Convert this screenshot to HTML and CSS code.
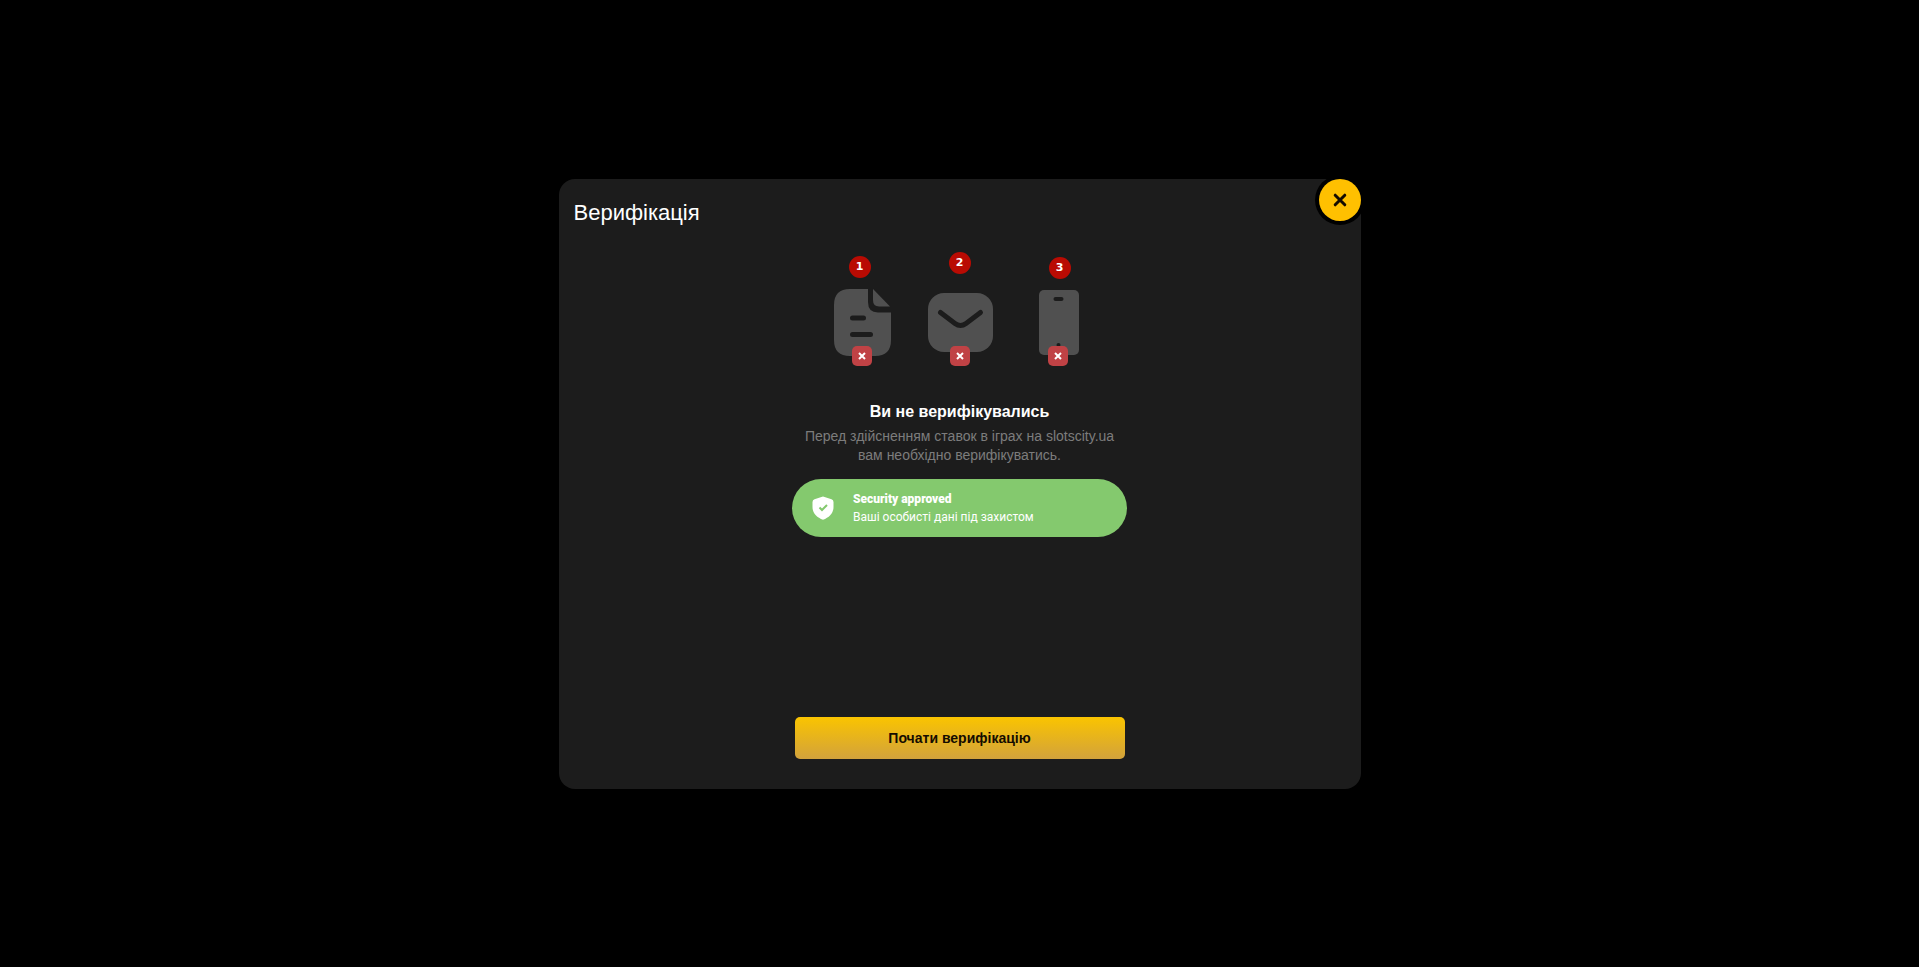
FILE: index.html
```html
<!DOCTYPE html>
<html lang="uk">

<head>
    <meta charset="UTF-8">
    <meta name="viewport" content="width=device-width, initial-scale=1.0">
    <title>Верифікація</title>
    <link rel="stylesheet" href="styles.css">
</head>

<body>
    <main class="overlay">
        <div class="modal" role="dialog" aria-labelledby="modalTitle">
            <button class="modal-close" type="button" aria-label="Закрити">
                <svg width="14" height="14" viewBox="0 0 14 14">
                    <path d="M2.2 2.2L11.8 11.8M11.8 2.2L2.2 11.8" />
                </svg>
            </button>
            <h1 class="modal-title" id="modalTitle">Верифікація</h1>

            <div class="steps">
                <div class="step">
                    <span class="step-number">1</span>
                    <svg width="100" height="88" viewBox="0 0 100 88">
                        <path class="shape" d="M40 11H58V24Q58 34.500 68 34.500H81V62Q81 78 65 78H40Q24 78 24 62V27Q24 11 40 11Z" />
                        <path class="shape" d="M63 11L80 28.500H69Q63 28.500 63 22Z" />
                        <path class="line" d="M42.500 40H53.500M42.500 56.500H60.500" />
                        <rect class="fail" x="42" y="68" width="20" height="20" rx="5" />
                        <path class="cross" d="M49 75L55 81M55 75L49 81" />
                    </svg>
                </div>
                <div class="step">
                    <span class="step-number">2</span>
                    <svg width="100" height="92" viewBox="0 0 100 92">
                        <rect class="shape" x="18" y="19" width="65" height="59" rx="16" />
                        <path class="line" d="M30.500 38.500L45 49.500Q50.500 53.500 56 49.500L70.500 38.500" />
                        <rect class="fail" x="40" y="72" width="20" height="20" rx="5" />
                        <path class="cross" d="M47 79L53 85M53 79L47 85" />
                    </svg>
                </div>
                <div class="step">
                    <span class="step-number">3</span>
                    <svg width="100" height="87" viewBox="0 0 100 87">
                        <rect class="shape" x="29" y="11" width="40" height="65" rx="5" />
                        <path class="line line-thin" d="M45.500 20H51.500" />
                        <circle class="dot" cx="48.500" cy="66" r="2" />
                        <rect class="fail" x="38" y="67" width="20" height="20" rx="5" />
                        <path class="cross" d="M45 74L51 80M51 74L45 80" />
                    </svg>
                </div>
            </div>

            <h2 class="status">Ви не верифікувались</h2>
            <p class="hint">Перед здійсненням ставок в іграх на slotscity.ua вам необхідно верифікуватись.</p>

            <div class="security">
                <svg width="22" height="24" viewBox="0 0 22 24">
                    <path class="shield" d="M11 0.500L19.500 3.200Q21.500 4 21.500 6V11C21.500 17.500 17 21.500 11 23.800C5 21.500 0.500 17.500 0.500 11V6Q0.500 4 2.500 3.200Z" />
                    <path class="check" d="M7.500 11.500L10 14L15 9" />
                </svg>
                <div>
                    <strong>Security approved</strong>
                    <p>Ваші особисті дані під захистом</p>
                </div>
            </div>

            <button class="start" type="button">Почати верифікацію</button>
        </div>
    </main>
</body>

</html>
```

FILE: styles.css
```css
* {
    box-sizing: border-box;
}

body {
    margin: 0;
    background-color: #000;
    color: #fff;
    font-family: "Liberation Sans", Arial, sans-serif;
}

h1,
h2,
p {
    margin: 0;
}

button {
    border: none;
    cursor: pointer;
}

.overlay {
    display: flex;
    align-items: center;
    justify-content: center;
    min-height: 100vh;
}

.modal {
    position: relative;
    display: flex;
    flex-direction: column;
    align-items: center;
    width: 100%;
    max-width: 802px;
    min-height: 610px;
    padding: 21px 15px 30px;
    background-color: #1c1c1c;
    border-radius: 16px;
}

.modal-close {
    position: absolute;
    top: 0;
    right: 0;
    display: flex;
    align-items: center;
    justify-content: center;
    width: 42px;
    height: 42px;
    padding: 0;
    background-color: #ffc000;
    border-radius: 50%;
    box-shadow: 0 0 0 4px #000;
}

.modal-close path {
    stroke: #150c00;
    stroke-width: 3;
    stroke-linecap: round;
}

.modal-title {
    align-self: flex-start;
    font-size: 22px;
    font-weight: normal;
    line-height: 26px;
}

.steps {
    display: flex;
    align-items: flex-end;
    margin-top: 26px;
}

.step {
    display: flex;
    flex-direction: column;
    align-items: center;
    width: 100px;
}

.step-number {
    width: 22px;
    height: 22px;
    background-color: #b90b03;
    border-radius: 50%;
    font-family: "DejaVu Sans", Verdana, sans-serif;
    font-size: 11px;
    font-weight: bold;
    line-height: 22px;
    text-align: center;
}

.shape {
    fill: #505050;
}

.line {
    fill: none;
    stroke: #1c1c1c;
    stroke-width: 5;
    stroke-linecap: round;
}

.line-thin {
    stroke-width: 4;
}

.dot {
    fill: #1c1c1c;
}

.fail {
    fill: #c04245;
}

.cross {
    stroke: #fff;
    stroke-width: 2;
}

.status {
    margin-top: 36px;
    font-size: 16px;
    line-height: 20px;
}

.hint {
    max-width: 330px;
    margin-top: 5px;
    color: #7c7c7c;
    font-size: 14px;
    line-height: 19px;
    text-align: center;
}

.security {
    display: flex;
    align-items: center;
    gap: 19px;
    width: 100%;
    max-width: 335px;
    min-height: 58px;
    margin-top: 14px;
    padding: 0 20px;
    background-color: #84c96e;
    border-radius: 29px;
    font-family: Roboto, sans-serif;
    font-size: 12px;
    line-height: 18px;
}

.security strong {
    display: block;
    font-weight: 900;
}

.shield {
    fill: #fff;
}

.check {
    fill: none;
    stroke: #84c96e;
    stroke-width: 2;
}

.start {
    width: 100%;
    max-width: 330px;
    height: 42px;
    margin-top: auto;
    background: linear-gradient(#fac400, #d2a23c);
    border-radius: 5px;
    color: #150c00;
    font-family: inherit;
    font-size: 14px;
    font-weight: bold;
}
```
